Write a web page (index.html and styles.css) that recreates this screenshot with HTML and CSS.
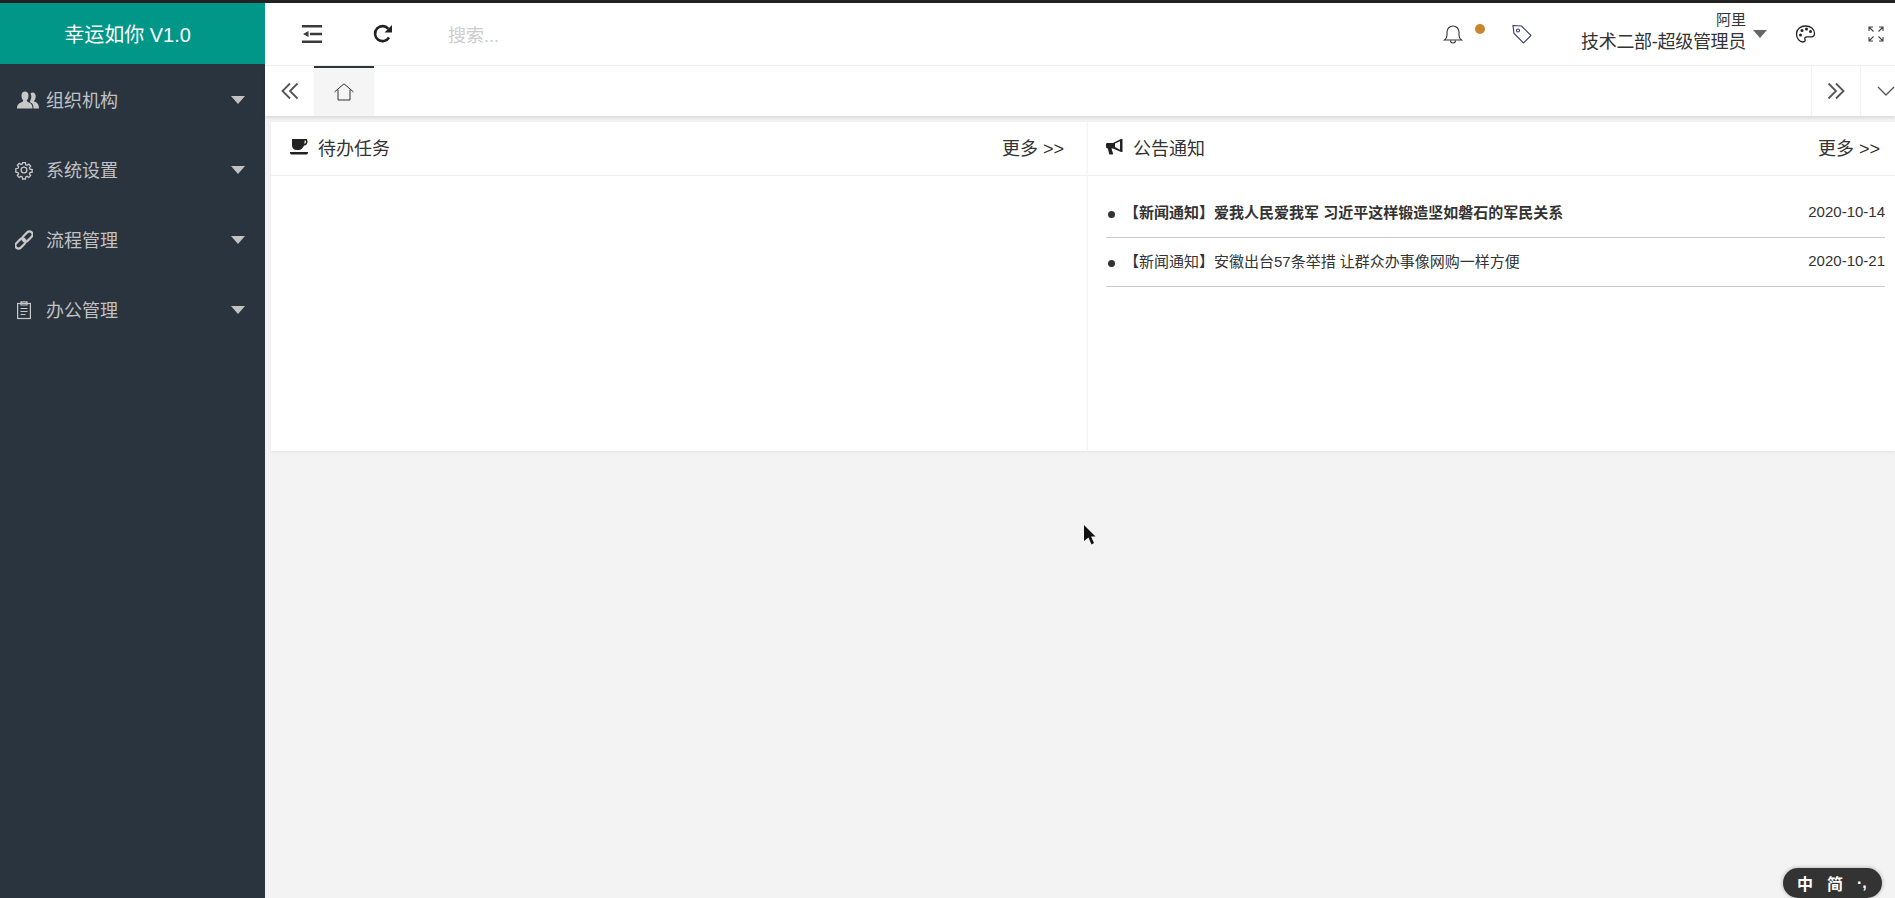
FILE: index.html
```html
<!DOCTYPE html>
<html lang="zh-CN">
<head>
<meta charset="utf-8">
<title>幸运如你 V1.0</title>
<link rel="stylesheet" href="styles.css">
</head>
<body>
<div class="app">
  <aside class="sidebar">
    <div class="logo">幸运如你 V1.0</div>
    <nav class="nav">
      <a class="nav-item">
        <svg class="nav-icon nav-icon-users" viewBox="0 0 22 18"><path fill="#c8c8c8" d="M0 17.500c0-4 2-5.500 5-6.500 1-.5 1.500-1 1-2-1-1-1.500-2.500-1.500-4.500C4.500 2 6 .5 8 .5s3.500 1.500 3.500 4c0 2-.5 3.500-1.500 4.500-.5 1 0 1.500 1 2 3 1 4.500 2.500 4.500 6.500z"/><path fill="#c8c8c8" d="M16.500 17.500c0-3.500-1-5-3-6-.8-.4-.6-1-.2-2 .8-1.300 1-2.500 1-4 0-1.300-.3-2.300-.8-3 .5-.6 1.200-1 2-1 1.900 0 3.200 1.500 3.200 3.800 0 1.700-.4 3-1.300 4-.4.900-.2 1.400.8 1.800 2.300.9 3.800 2.500 3.800 6.400z"/></svg>
        <span class="nav-label">组织机构</span><i class="caret caret-light"></i>
      </a>
      <a class="nav-item">
        <svg class="nav-icon" viewBox="-1 -1 22 22"><g fill="none" stroke="#c8c8c8" stroke-width="1.600"><circle cx="10" cy="10" r="3.500"/><path d="M8.300 1h3.400l.5 2.600 1.500.7 2.200-1.400 2.200 2.300-1.500 2.100.7 1.600 2.700.5v3.200l-2.700.5-.7 1.600 1.500 2.100-2.200 2.300-2.200-1.400-1.500.7-.5 2.600H8.300l-.5-2.600-1.500-.7-2.200 1.400-2.200-2.300 1.500-2.100-.7-1.600-2.700-.5V8.400l2.700-.5.700-1.600-1.500-2.100 2.200-2.300 2.200 1.400 1.500-.7z"/></g></svg>
        <span class="nav-label">系统设置</span><i class="caret caret-light"></i>
      </a>
      <a class="nav-item">
        <svg class="nav-icon" viewBox="0 0 20 20"><g fill="none" stroke="#c8c8c8" stroke-width="2.400" transform="rotate(-45 10 10)"><rect x="-2" y="6.500" width="13" height="7" rx="3.500"/><rect x="9" y="6.500" width="13" height="7" rx="3.500"/></g></svg>
        <span class="nav-label">流程管理</span><i class="caret caret-light"></i>
      </a>
      <a class="nav-item">
        <svg class="nav-icon nav-icon-clip" viewBox="0 0 14 18"><g fill="none" stroke="#c8c8c8" stroke-width="1.200"><rect x=".6" y="2.500" width="12.800" height="15"/><path d="M4 4V.8h6V4zM3.500 7.500h7M3.500 10.500h7M3.500 13.500h5"/></g></svg>
        <span class="nav-label">办公管理</span><i class="caret caret-light"></i>
      </a>
    </nav>
  </aside>
  <div class="content">
    <header class="topbar">
      <div class="top-left">
        <svg class="tool-menu" viewBox="0 0 20 18"><path fill="#3a3a3a" d="M0 0h20v2.600H0zM0 15.400h20V18H0zM8 7.700h12v2.600H8zM6.500 6v6L1 9z"/></svg>
        <svg class="tool-refresh" viewBox="0 0 20 20"><path fill="none" stroke="#222" stroke-width="2.600" d="M16 13.500A7.500 7.500 0 1 1 15.300 4.800"/><path fill="#222" d="M19 1v7.500h-7.500z"/></svg>
        <span class="search">搜索...</span>
      </div>
      <div class="top-right">
        <svg class="bell" viewBox="0 0 20 20"><g fill="none" stroke="#333" stroke-width="1.100"><path d="M1.500 16h17c-1.500-1-2.500-2.500-2.500-5V8a6 6 0 0 0-12 0v3c0 2.500-1 4-2.500 5z"/><path d="M7.500 16.500a2.500 2.500 0 0 0 5 0"/></g></svg>
        <i class="dot"></i>
        <svg class="tag" viewBox="0 0 20 20"><g fill="none" stroke="#3a3f6a" stroke-width="1.100"><path d="M1 1.500l8.500.5 9.500 9.500-7.500 7.500L2 9.500z"/><circle cx="6" cy="6.500" r="1.500"/></g></svg>
        <div class="user">
          <span class="user-name">阿里</span>
          <span class="user-role">技术二部-超级管理员</span>
        </div>
        <i class="caret caret-dark"></i>
        <svg class="palette" viewBox="0 0 20 20"><path fill="none" stroke="#222" stroke-width="1.300" d="M10 2C5 2 1 5.500 1 10c0 4.500 3 8 6.500 8 2 0 2.500-1.200 2-2.500-.6-1.500.2-2.700 1.800-2.700h4.200c2 0 3.500-1.200 3.500-3.300C19 5 15 2 10 2z"/><g fill="#222"><circle cx="5" cy="11" r="1.500"/><circle cx="6.500" cy="6.500" r="1.500"/><circle cx="11" cy="5" r="1.500"/><circle cx="15" cy="7.500" r="1.500"/></g></svg>
        <svg class="expand" viewBox="0 0 16 16"><g fill="none" stroke="#444" stroke-width="1.100"><path d="M1 5V1h4M1 1l4.500 4.500M15 5V1h-4M15 1l-4.500 4.500M1 11v4h4M1 15l4.500-4.500M15 11v4h-4M15 15l-4.500-4.500"/></g></svg>
      </div>
    </header>
    <div class="tabs">
      <div class="tab-arrow tab-arrow-left">
        <svg class="chev" viewBox="0 0 18 18"><path fill="none" stroke="#555" stroke-width="1.800" d="M9 1.500L1.500 9 9 16.500M16.500 1.500L9 9l7.500 7.500"/></svg>
      </div>
      <div class="tab-home">
        <svg class="home" viewBox="0 0 20 18"><path fill="none" stroke="#333" stroke-width="1" d="M.5 9L10 .8 19.500 9M4 6.500V17h12V6.500"/></svg>
      </div>
      <div class="tab-fill"></div>
      <div class="tab-ctl">
        <svg class="chev" viewBox="0 0 18 18"><path fill="none" stroke="#555" stroke-width="1.800" d="M9 1.500L16.500 9 9 16.500M1.500 1.500L9 9l-7.500 7.500"/></svg>
      </div>
      <div class="tab-ctl tab-ctl-last">
        <svg class="chev-down" viewBox="0 0 18 10"><path fill="none" stroke="#555" stroke-width="1.300" d="M1 1l8 8 8-8"/></svg>
      </div>
    </div>
    <main class="main">
      <section class="card card-left">
        <div class="card-head">
          <div class="card-title">
            <svg class="card-icon" viewBox="0 0 18 16"><path fill="#222" d="M2 0h15v1.500h.5c0 0 .5 4-2.500 5H14C13 9 11 11 8.500 11h-2C3 11 2 8 2 6zM14.500 1.800v3.200c1.300-.3 1.500-1.800 1.500-3.200zM0 13h18v.5c0 1.500-1 2-2 2H2c-1 0-2-.5-2-2z"/></svg>
            <span>待办任务</span>
          </div>
          <a class="more">更多 &gt;&gt;</a>
        </div>
      </section>
      <section class="card card-right">
        <div class="card-head">
          <div class="card-title">
            <svg class="card-icon" viewBox="0 0 18 16"><path fill="#222" d="M0 5.500C0 4.500.5 4 1.500 4H7l8-4h1.500v13H15L7 9.500H5.500L7 14.500c.1.500-.2 1-.7 1H4c-.4 0-.7-.2-.8-.6L1.800 9.500C.8 9.500 0 8.700 0 8z"/><path fill="#fff" d="M14 2.300v8.400L9 8V4.500z"/></svg>
            <span>公告通知</span>
          </div>
          <a class="more">更多 &gt;&gt;</a>
        </div>
        <ul class="news">
          <li class="news-row news-strong"><span class="news-text">【新闻通知】爱我人民爱我军 习近平这样锻造坚如磐石的军民关系</span><time class="news-date">2020-10-14</time></li>
          <li class="news-row"><span class="news-text">【新闻通知】安徽出台57条举措 让群众办事像网购一样方便</span><time class="news-date">2020-10-21</time></li>
        </ul>
      </section>
    </main>
  </div>
</div>
<svg class="cursor" viewBox="0 0 12 20"><path fill="#111" d="M0 0l11.500 11.500H7l3 6.500-2.500 1.500-3-7L0 16z"/></svg>
<div class="ime"><span>中</span><span>简</span><span class="ime-punc">·,</span></div>
</body>
</html>
```
FILE: styles.css
```css
* { box-sizing: border-box; }
html, body { margin: 0; height: 100%; overflow: hidden; }
body {
  font-family: "Liberation Sans", "Noto Sans CJK SC", sans-serif;
  color: #333;
  background: #f3f3f3;
  border-top: 3px solid #222;
}
a { color: inherit; text-decoration: none; }
ul { list-style: none; margin: 0; padding: 0; }

.app { display: grid; grid-template-columns: 265px 1fr; height: 895px; }

.sidebar { background: #2a343f; color: #c2c2c2; }
.logo {
  height: 61px;
  background: #009688;
  color: #fff;
  font-size: 20px;
  display: flex;
  align-items: center;
  justify-content: center;
  padding-right: 10px;
}
.nav { padding-top: 1px; }
.nav-item { display: flex; align-items: center; height: 70px; padding: 0 20px 0 15px; }
.nav-icon { width: 18px; height: 20px; margin-right: 13px; flex: none; }
.nav-icon-users { width: 22px; margin: 0 7px 0 2px; }
.nav-icon-clip { width: 14px; margin: 0 15px 0 2px; }
.nav-label { font-size: 18px; flex: 1; padding-bottom: 2px; }
.caret { display: block; width: 0; height: 0; border-style: solid; border-color: transparent; border-width: 8px 7.500px 0; }
.caret-light { border-top-color: #c2c2c2; }
.caret-dark { border-top-color: #666; margin: 0 2px 0 6px; }

.content { min-width: 0; display: flex; flex-direction: column; }

.topbar {
  height: 63px;
  background: #fff;
  border-bottom: 1px solid #f0f0f0;
  display: flex;
  align-items: center;
  justify-content: space-between;
}
.top-left { display: flex; align-items: center; padding-left: 37px; }
.tool-menu { width: 20px; height: 18px; margin-right: 51px; }
.tool-refresh { width: 20px; height: 20px; margin-right: 55px; }
.search { font-size: 18px; color: #ccc; }

.top-right { display: flex; align-items: center; padding-right: 11px; }
.bell { width: 20px; height: 20px; margin-right: 12px; }
.dot { width: 10px; height: 10px; border-radius: 50%; background: #c9842f; margin: -10px 27px 0 0; }
.tag { width: 20px; height: 20px; margin-right: 49px; }
.user { display: flex; flex-direction: column; align-items: flex-end; line-height: 1; padding-bottom: 1px; margin-right: 1px; }
.user-name { font-size: 15px; margin: -4px 0 6px; }
.user-role { font-size: 18px; letter-spacing: -.3px; }
.palette { width: 21px; height: 20px; margin: 0 0 0 26px; }
.expand { width: 16px; height: 16px; margin-left: 52px; }

.tabs {
  height: 50px;
  background: #fff;
  display: flex;
  box-shadow: 0 2px 3px rgba(0, 0, 0, .1);
  position: relative;
}
.tab-arrow { width: 49px; display: flex; align-items: center; justify-content: center; }
.tab-home {
  width: 60px;
  background: #f5f5f5;
  border-top: 2px solid #2a343f;
  display: flex;
  align-items: center;
  justify-content: center;
}
.tab-fill { flex: 1; }
.tab-ctl { width: 49px; border-left: 1px solid #f0f0f0; display: flex; align-items: center; justify-content: center; }
.tab-ctl-last { width: 35px; justify-content: flex-start; padding-left: 16px; }
.chev { width: 18px; height: 18px; }
.chev-down { width: 18px; height: 10px; flex: none; }
.home { width: 20px; height: 18px; }

.main {
  display: grid;
  grid-template-columns: 816px 1fr;
  align-items: start;
  padding: 6px 0 0 6px;
}
.card { height: 329px; background: #fff; box-shadow: 0 1px 2px rgba(0, 0, 0, .06); }
.card-right { border-left: 1px solid #f5f5f5; }
.card-head {
  height: 54px;
  border-bottom: 1px solid #f0f0f0;
  display: flex;
  align-items: center;
  justify-content: space-between;
  padding: 0 23px 3px 19px;
  font-size: 18px;
}
.card-right .card-head { padding: 0 15px 3px 18px; }
.card-title { display: flex; align-items: center; }
.card-icon { width: 18px; height: 16px; margin-right: 10px; }
.card-right .card-icon { margin-right: 9px; }
.more { color: #333; }

.news { padding: 13px 10px 0 18px; }
.news-row {
  height: 49px;
  border-bottom: 1px solid #ccc;
  display: flex;
  align-items: center;
  justify-content: space-between;
  font-size: 15px;
  position: relative;
  padding: 0 0 4px 18px;
}
.news-row::before {
  content: "";
  position: absolute;
  left: 2px;
  top: 22px;
  width: 7px;
  height: 7px;
  border-radius: 50%;
  background: #333;
}
.news-strong .news-text { font-weight: 700; }

.cursor { position: absolute; left: 1084px; top: 525px; width: 12px; height: 20px; }
.ime {
  position: absolute;
  left: 1783px;
  top: 868px;
  width: 99px;
  height: 30px;
  border-radius: 15px;
  background: #333;
  color: #fff;
  font-size: 16px;
  font-weight: 700;
  display: flex;
  align-items: center;
  gap: 14px;
  padding-left: 14px;
  box-shadow: 0 0 4px rgba(0, 0, 0, .3);
}
.ime-punc { font-size: 16px; }
```
